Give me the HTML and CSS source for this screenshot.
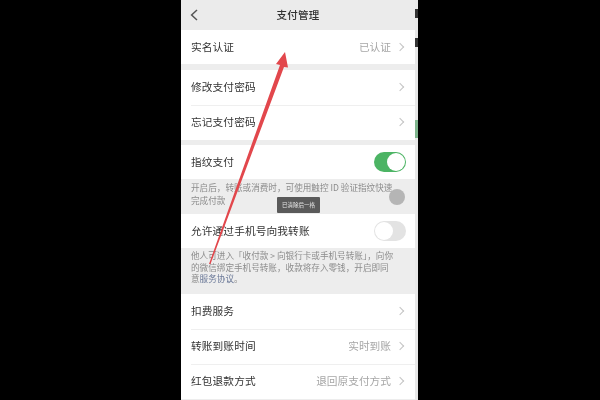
FILE: index.html
```html
<!DOCTYPE html>
<html lang="zh">
<head>
<meta charset="utf-8">
<title>支付管理</title>
<link rel="stylesheet" href="styles.css">
</head>
<body>
<div class="stage">
  <main class="phone">
    <header class="nav">
      <svg class="back" width="8" height="12" viewBox="0 0 8 12"><path d="M7 1 1.600 6 7 11" fill="none" stroke="#555" stroke-width="1.5"/></svg>
      <span class="nav-title">支付管理</span>
    </header>
    <section class="group">
      <div class="row short"><span class="label">实名认证</span><span class="value">已认证</span><i class="chev"></i></div>
    </section>
    <section class="group gap">
      <div class="row"><span class="label">修改支付密码</span><i class="chev"></i></div>
      <div class="row line"><span class="label">忘记支付密码</span><i class="chev"></i></div>
    </section>
    <section class="group gap-small">
      <div class="row short"><span class="label">指纹支付</span><span class="switch on"><b></b></span></div>
    </section>
    <p class="note n1">开启后，转账或消费时，可使用触控 ID 验证指纹快速<br>完成付款</p>
    <section class="group">
      <div class="row short"><span class="label">允许通过手机号向我转账</span><span class="switch"><b></b></span></div>
    </section>
    <p class="note n2">他人可进入「收付款 &gt; 向银行卡或手机号转账」，向你<br>的微信绑定手机号转账，收款将存入零钱，开启即同<br>意<span class="link">服务协议</span>。</p>
    <section class="group">
      <div class="row"><span class="label">扣费服务</span><i class="chev"></i></div>
      <div class="row line"><span class="label">转账到账时间</span><span class="value">实时到账</span><i class="chev"></i></div>
      <div class="row line"><span class="label">红包退款方式</span><span class="value">退回原支付方式</span><i class="chev"></i></div>
    </section>
    <div class="float"></div>
    <div class="toast">已清除后一格</div>
    <svg class="arrow" width="234" height="400" viewBox="0 0 234 400"><path d="M104 52 95 64l4 1-71 199h1.500L103 67l4 .5z" fill="#e2474c"/></svg>
  </main>
  <aside class="edge"><i class="m1"></i><i class="m2"></i><i class="m3"></i></aside>
</div>
</body>
</html>
```
FILE: styles.css
```css
html, body { margin: 0; height: 100%; background: #000; }
.stage { width: 600px; height: 400px; display: flex; padding-left: 181px; box-sizing: border-box; overflow: hidden; font-family: "Noto Sans CJK SC", "Noto Sans", sans-serif; }
.phone { position: relative; width: 234px; height: 400px; background: #ededed; overflow: hidden; filter: blur(0.7px); display: flex; flex-direction: column; flex: none; }
.edge { position: relative; width: 3px; height: 400px; background: #e8e8e8; flex: none; }
.edge i { position: absolute; left: 0; width: 3px; display: block; }
.m1 { top: 9px; height: 9px; background: #333; }
.m2 { top: 38px; height: 9px; background: #333; }
.m3 { top: 120px; height: 18px; background: #7fb58d; }
.nav { height: 30px; flex: none; position: relative; display: flex; align-items: center; justify-content: center; background: #ebebeb; padding-bottom: 1px; box-sizing: border-box; }
.back { position: absolute; left: 9px; top: 9px; }
.nav-title { font-size: 10.5px; font-weight: 500; color: #333; letter-spacing: 0.3px; }
.group { background: #fff; flex: none; }
.gap { margin-top: 6px; }
.gap-small { margin-top: 5px; }
.row { height: 35px; display: flex; align-items: center; padding: 0 10px 2px; box-sizing: border-box; position: relative; }
.row.short { height: 34px; padding-bottom: 1px; }
.line::before { content: ""; position: absolute; left: 10px; right: 0; top: 0; height: 1px; background: #efefef; }
.label { font-size: 10.7px; color: #333; flex: 1; letter-spacing: 0.1px; }
.value { font-size: 10.7px; color: #a6a6a6; margin-right: 6px; }
.chev { width: 5px; height: 5px; border-top: 1.2px solid #c4c4c4; border-right: 1.2px solid #c4c4c4; transform: rotate(45deg); margin-right: 2px; flex: none; }
.switch { width: 32px; height: 20px; border-radius: 10px; background: #e3e3e3; position: relative; flex: none; margin-right: -1px; }
.switch b { position: absolute; left: 1px; top: 1px; width: 18px; height: 18px; border-radius: 50%; background: #fff; }
.switch.on { background: #4cb464; }
.switch.on b { left: 13px; }
.note { margin: 0; font-size: 8.6px; color: #8c8c8c; flex: none; box-sizing: border-box; padding-left: 10px; white-space: nowrap; }
.n1 { height: 35px; padding-top: 2px; line-height: 13px; }
.n2 { height: 46px; padding-top: 2px; line-height: 11.5px; }
.link { color: #6c7a99; }
.toast { position: absolute; left: 96px; top: 197px; width: 43px; height: 16px; background: #5a5a5a; color: #e8e8e8; font-size: 5.5px; line-height: 16px; text-align: center; border-radius: 1px; }
.float { position: absolute; left: 208px; top: 189px; width: 16px; height: 16px; border-radius: 50%; background: #b5b5b5; }
.arrow { position: absolute; left: 0; top: 0; }
```
